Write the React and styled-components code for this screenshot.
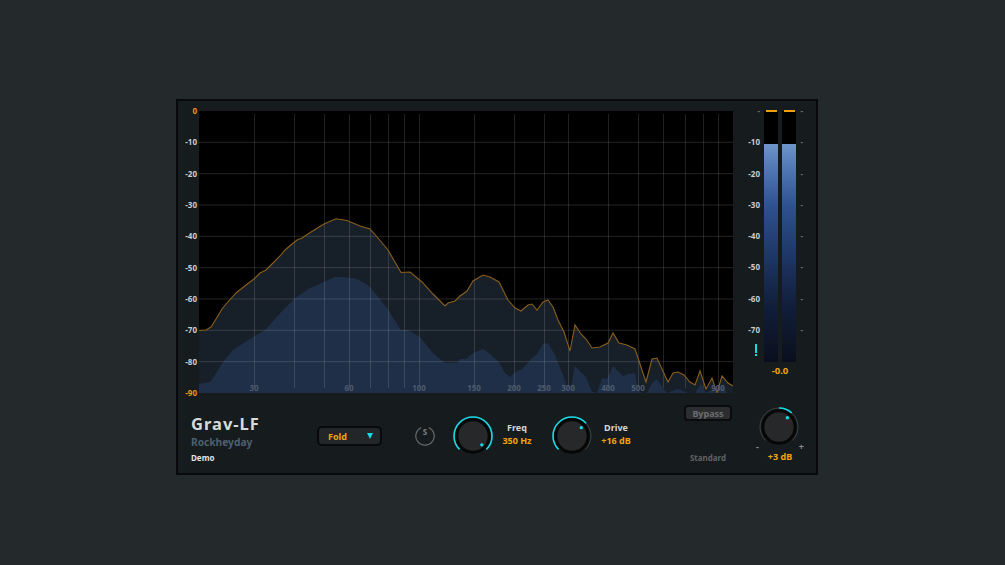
import React from 'react';
import styled, { createGlobalStyle } from 'styled-components';

const GlobalStyle = createGlobalStyle`
  html, body {
    margin: 0;
    padding: 0;
    background: #24292c;
  }
  body {
    font-family: "Noto Sans", "Liberation Sans", sans-serif;
    font-weight: 700;
  }
`;

const Page = styled.div`
  width: 1005px;
  height: 565px;
  padding: 99px 0 0 176px;
  box-sizing: border-box;
  overflow: hidden;
`;

const Panel = styled.div`
  width: 642px;
  height: 376px;
  box-sizing: border-box;
  border: 2px solid #07090a;
  background: #161b1e;
  display: flex;
  flex-direction: column;
`;

const TopRow = styled.div`
  display: flex;
  height: 290px;
  padding-top: 4px;
`;

const DbAxis = styled.div`
  width: 19px;
  height: 294px;
  display: flex;
  flex-direction: column;
  justify-content: space-between;
  align-items: flex-end;
`;

const ScaleLabel = styled.span`
  height: 12px;
  line-height: 12px;
  font-size: 8px;
  color: ${(p) => (p.$accent ? '#e59a0c' : '#c9cccd')};
`;

const Tick = styled.span`
  height: 12px;
  line-height: 12px;
  font-size: 8px;
  color: #6c7174;
`;

const PlotFrame = styled.div`
  width: 534px;
  height: 282px;
  margin: 6px 0 0 2px;
  background: #000;
`;

const PlotSvg = styled.svg`
  display: block;
`;

const FreqLabel = styled.text`
  font-family: "Noto Sans", sans-serif;
  font-size: 8px;
  font-weight: 700;
  fill: #4d5c6d;
  text-anchor: middle;
`;

const MeterArea = styled.div`
  display: flex;
`;

const MeterLeft = styled.div`
  width: 27px;
  display: flex;
  flex-direction: column;
`;

const MeterScale = styled.div`
  height: 231px;
  display: flex;
  flex-direction: column;
  justify-content: space-between;
  align-items: flex-end;
`;

const Warning = styled.div`
  width: 2px;
  height: 12px;
  margin: 8px 0 0 22px;
  display: flex;
  flex-direction: column;
  justify-content: space-between;
  &::before {
    content: '';
    height: 9px;
    background: #18d8e2;
  }
  &::after {
    content: '';
    height: 2px;
    background: #18d8e2;
  }
`;

const MeterCenter = styled.div`
  width: 32px;
  margin-left: 4px;
  padding-top: 6px;
  display: flex;
  flex-direction: column;
`;

const Bars = styled.div`
  display: flex;
  gap: 4px;
`;

const Bar = styled.div`
  width: 14px;
  height: 251px;
  background: #000;
  position: relative;
  padding-top: 33px;
  box-sizing: border-box;
  &::before {
    content: '';
    position: absolute;
    left: 2px;
    right: 1px;
    top: -1px;
    height: 2px;
    background: #f2a20f;
  }
`;

const BarFill = styled.div`
  height: 100%;
  background: linear-gradient(180deg, #6f95cb 0%, #4f76b2 12%, #2f5290 28%, #1e3868 50%, #111e3a 75%, #0a0f1c 100%);
`;

const PeakValue = styled.div`
  margin-top: 3px;
  text-align: center;
  font-size: 9.5px;
  line-height: 12px;
  color: #f5a30c;
`;

const MeterTicks = styled.div`
  width: 7px;
  height: 231px;
  display: flex;
  flex-direction: column;
  justify-content: space-between;
  align-items: flex-end;
`;

const BottomRow = styled.div`
  flex: 1;
  display: flex;
  align-items: flex-start;
  padding-left: 13px;
`;

const Brand = styled.div`
  width: 126px;
  padding-top: 19px;
  display: flex;
  flex-direction: column;
`;

const Title = styled.div`
  font-size: 16.5px;
  line-height: 20px;
  letter-spacing: 1px;
  color: #d8d9d9;
`;

const Vendor = styled.div`
  font-size: 10.2px;
  line-height: 14px;
  margin-top: 1px;
  color: #4d6070;
`;

const Demo = styled.div`
  font-size: 8px;
  line-height: 12px;
  margin-top: 3px;
  color: #e2e2e2;
`;

const Select = styled.div`
  width: 65px;
  height: 20px;
  margin-top: 31px;
  box-sizing: border-box;
  border: 2px solid #08090a;
  border-radius: 5px;
  background: #232628;
  padding: 0 7px 0 9px;
  display: flex;
  align-items: center;
  justify-content: space-between;
  font-size: 9px;
  color: #f5a30c;
`;

const Caret = styled.span`
  width: 0;
  height: 0;
  border-left: 3.5px solid transparent;
  border-right: 3.5px solid transparent;
  border-top: 6px solid #17d9e3;
`;

const SoloSlot = styled.div`
  margin: 31px 0 0 33px;
  width: 20px;
  height: 20px;
  position: relative;
`;

const SoloLetter = styled.span`
  position: absolute;
  left: 0;
  right: 0;
  top: 1px;
  text-align: center;
  font-size: 8px;
  line-height: 10px;
  color: #7e8082;
`;

const KnobBox = styled.div`
  width: 42px;
  height: 42px;
  margin: ${(p) => p.$margin};
  flex-shrink: 0;
`;

const KnobSvg = styled.svg`
  display: block;
`;

const Readout = styled.div`
  width: ${(p) => p.$width}px;
  margin-top: 26px;
  text-align: center;
  display: flex;
  flex-direction: column;
`;

const ReadoutName = styled.div`
  font-size: 9px;
  line-height: 13px;
  color: #d5d6d6;
`;

const ReadoutValue = styled.div`
  font-size: 9px;
  line-height: 13px;
  color: #f5a30c;
`;

const ModeColumn = styled.div`
  width: 48px;
  margin-left: 45px;
  padding-top: 10px;
  display: flex;
  flex-direction: column;
  align-items: center;
`;

const BypassButton = styled.div`
  width: 48px;
  height: 16px;
  box-sizing: border-box;
  border: 2px solid #0a0b0c;
  border-radius: 4px;
  background: #2b2d2f;
  display: flex;
  align-items: center;
  justify-content: center;
  font-size: 9px;
  color: #6b6d6f;
`;

const ModeText = styled.div`
  margin-top: 31px;
  font-size: 8px;
  line-height: 12px;
  color: #5d6266;
`;

const OutputColumn = styled.div`
  width: 50px;
  margin-left: 22px;
  padding-top: 11px;
  display: flex;
  flex-direction: column;
  align-items: center;
`;

const PlusMinus = styled.div`
  width: 48px;
  margin: -6px 0 0 2px;
  display: flex;
  justify-content: space-between;
  font-size: 9px;
  line-height: 10px;
  color: #8b8e90;
`;

const OutputValue = styled.div`
  font-size: 9px;
  line-height: 12px;
  margin: -1px 0 0 2px;
  color: #f5a30c;
`;

// page-coordinate points read off the spectrum
const peak = [
  [199, 330.5], [206, 330], [211, 327], [216, 319], [222, 309], [226, 304], [236, 293], [246, 285],
  [254, 279], [260, 273], [266, 270], [272, 264], [280, 256], [285, 250], [291, 245], [297, 240],
  [302, 238], [311, 232], [324, 224], [336, 218.7], [347, 220.5], [360, 226], [370, 229], [378, 238],
  [388, 250], [401, 272.5], [410, 272], [422, 282], [433, 294], [445, 306], [448, 303], [455, 301],
  [460, 296], [467, 291], [473, 281], [483, 275], [490, 277], [499, 282], [508, 300], [515, 308],
  [521, 311], [528, 305], [532, 304], [537, 310], [543, 302], [548, 300], [553, 307], [558, 320],
  [564, 332], [570, 351], [575, 325], [581, 334], [586, 339], [592, 348], [600, 347], [608, 343],
  [613, 333], [619, 343], [627, 345], [635, 349], [646, 382], [652, 359], [657, 358], [662, 369],
  [668, 382], [673, 373], [678, 372], [684, 375], [690, 382], [695, 385], [700, 371], [706, 389],
  [712, 378], [717, 393], [722, 376], [728, 383], [733, 386],
];

const average = [
  [199, 384], [210, 382], [215, 375], [223, 362], [233, 350], [245, 342], [265, 330], [282, 311],
  [295, 298], [310, 288], [335, 277], [343, 277], [357, 279], [368, 285], [375, 293], [387, 308],
  [401, 330], [408, 330], [420, 337], [433, 353], [445, 363], [457, 363], [460, 359], [466, 359],
  [473, 353], [483, 349], [489, 353], [499, 362], [505, 373], [510, 377], [515, 372], [522, 369],
  [532, 358], [537, 354], [543, 344], [548, 343], [555, 355], [563, 375], [567, 387], [570, 392],
  [575, 366], [586, 377], [592, 392], [597, 393], [602, 378], [607, 379], [613, 366], [623, 376],
  [628, 374], [635, 373], [638, 390], [642, 393], [647, 393], [652, 383], [657, 379], [662, 387],
  [667, 393], [678, 389], [688, 393], [695, 393], [701, 384], [706, 393], [713, 389], [717, 393],
  [722, 385], [727, 393], [733, 393],
];

const toPath = (pts) => pts.map(([x, y], i) => `${i ? 'L' : 'M'}${x} ${y}`).join(' ');
const toArea = (pts) => `${toPath(pts)} L733 393 L199 393 Z`;

const freqLines = [254, 294, 324, 349, 370, 388, 404, 419, 474, 514, 544, 568, 608, 638, 663, 685, 703, 718];
const freqLabels = [
  [254, '30'], [349, '60'], [419, '100'], [474, '150'], [514, '200'], [544, '250'],
  [568, '300'], [608, '400'], [638, '500'], [718, '900'],
];
const dbLevels = [-10, -20, -30, -40, -50, -60, -70, -80];

const Spectrum = () => (
  <PlotSvg width="534" height="282" viewBox="199 111 534 282">
    <path d={toArea(peak)} fill="#171f29" />
    <path d={toArea(average)} fill="#1f2f47" />
    {dbLevels.map((_, i) => {
      const y = 111 + (i + 1) * 31.33;
      return <line key={i} x1="199" x2="733" y1={y} y2={y} stroke="#fff" strokeOpacity="0.14" />;
    })}
    {freqLines.map((x) => (
      <line key={x} x1={x + 0.5} x2={x + 0.5} y1="114" y2="388" stroke="#fff" strokeOpacity="0.13" />
    ))}
    <path d={toPath(peak)} fill="none" stroke="#8a5f1a" strokeWidth="1.1" />
    {freqLabels.map(([x, t]) => (
      <FreqLabel key={t} x={x} y="391">{t}</FreqLabel>
    ))}
  </PlotSvg>
);

const polar = (deg, r) => {
  const a = ((deg - 90) * Math.PI) / 180;
  return [21 + r * Math.cos(a), 21 + r * Math.sin(a)];
};

const arc = (from, to, r) => {
  const [x1, y1] = polar(from, r);
  const [x2, y2] = polar(to, r);
  return `M${x1} ${y1} A${r} ${r} 0 ${to - from > 180 ? 1 : 0} 1 ${x2} ${y2}`;
};

const Knob = ({ from, to, margin }) => {
  const [dx, dy] = polar(to, 12.5);
  return (
    <KnobBox $margin={margin}>
      <KnobSvg width="42" height="42" viewBox="0 0 42 42">
        <path d={arc(-135, 135, 19)} fill="none" stroke="#3f4447" strokeWidth="1" />
        <path d={arc(from, to, 19)} fill="none" stroke="#17d9e3" strokeWidth="1.6" />
        <circle cx="21" cy="21" r="16.2" fill="#26282a" stroke="#060707" strokeWidth="3" />
        <circle cx={dx} cy={dy} r="1.7" fill="#17d9e3" />
      </KnobSvg>
    </KnobBox>
  );
};

const SoloIcon = () => (
  <svg width="20" height="20" viewBox="0 0 20 20">
    <path d="M6.2 1.6 A9.2 9.2 0 1 0 13.8 1.6" fill="none" stroke="#66696b" strokeWidth="1.2" />
  </svg>
);

const App = () => (
  <Page>
    <GlobalStyle />
    <Panel>
      <TopRow>
        <DbAxis>
          <ScaleLabel $accent>0</ScaleLabel>
          {dbLevels.map((d) => (
            <ScaleLabel key={d}>{d}</ScaleLabel>
          ))}
          <ScaleLabel $accent>-90</ScaleLabel>
        </DbAxis>
        <PlotFrame>
          <Spectrum />
        </PlotFrame>
        <MeterArea>
          <MeterLeft>
            <MeterScale>
              <Tick>-</Tick>
              {dbLevels.slice(0, 7).map((d) => (
                <ScaleLabel key={d}>{d}</ScaleLabel>
              ))}
            </MeterScale>
            <Warning />
          </MeterLeft>
          <MeterCenter>
            <Bars>
              {[0, 1].map((b) => (
                <Bar key={b}>
                  <BarFill />
                </Bar>
              ))}
            </Bars>
            <PeakValue>-0.0</PeakValue>
          </MeterCenter>
          <MeterTicks>
            {['a', 'b', 'c', 'd', 'e', 'f', 'g', 'h'].map((k) => (
              <Tick key={k}>-</Tick>
            ))}
          </MeterTicks>
        </MeterArea>
      </TopRow>
      <BottomRow>
        <Brand>
          <Title>Grav-LF</Title>
          <Vendor>Rockheyday</Vendor>
          <Demo>Demo</Demo>
        </Brand>
        <Select>
          Fold
          <Caret />
        </Select>
        <SoloSlot>
          <SoloIcon />
          <SoloLetter>S</SoloLetter>
        </SoloSlot>
        <Knob from={-135} to={135} margin="20px 0 0 17px" />
        <Readout $width={46}>
          <ReadoutName>Freq</ReadoutName>
          <ReadoutValue>350 Hz</ReadoutValue>
        </Readout>
        <Knob from={-135} to={48} margin="20px 0 0 11px" />
        <Readout $width={46}>
          <ReadoutName>Drive</ReadoutName>
          <ReadoutValue>+16 dB</ReadoutValue>
        </Readout>
        <ModeColumn>
          <BypassButton>Bypass</BypassButton>
          <ModeText>Standard</ModeText>
        </ModeColumn>
        <OutputColumn>
          <Knob from={0} to={42} margin="0" />
          <PlusMinus>
            <span>-</span>
            <span>+</span>
          </PlusMinus>
          <OutputValue>+3 dB</OutputValue>
        </OutputColumn>
      </BottomRow>
    </Panel>
  </Page>
);

export default App;
